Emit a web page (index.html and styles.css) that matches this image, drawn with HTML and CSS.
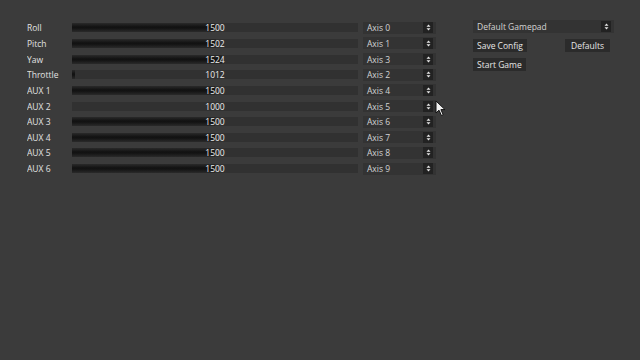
FILE: index.html
```html
<!DOCTYPE html>
<html lang="en">
<head>
    <meta charset="UTF-8">
    <title>Gamepad Config</title>
    <link rel="stylesheet" href="styles.css">
</head>
<body>
    <div class="main">
        <div class="channels" id="channels"></div>

        <div class="side">
            <div class="select wide">
                <span>Default Gamepad</span>
                <span class="arrows"><svg width="5" height="7" viewBox="0 0 5 7"><path d="M2.5 0.5 L4.5 2.8 L0.5 2.8 Z M2.5 6.5 L4.5 4.2 L0.5 4.2 Z" fill="#e6e6e6"/></svg></span>
            </div>
            <div class="btn-row">
                <button>Save Config</button>
                <button class="defaults">Defaults</button>
            </div>
            <div class="btn-row">
                <button>Start Game</button>
            </div>
        </div>
    </div>

    <svg class="cursor" width="12" height="17" viewBox="0 0 12 17">
        <path d="M1 1 L1 13 L4 10.2 L6.4 15.5 L8.2 14.7 L5.9 9.6 L10 9.6 Z" fill="#f2f2f2" stroke="#111" stroke-width="1"/>
    </svg>

    <script>
        const channels = [
            ['Roll', 1500, 'Axis 0'],
            ['Pitch', 1502, 'Axis 1'],
            ['Yaw', 1524, 'Axis 3'],
            ['Throttle', 1012, 'Axis 2'],
            ['AUX 1', 1500, 'Axis 4'],
            ['AUX 2', 1000, 'Axis 5'],
            ['AUX 3', 1500, 'Axis 6'],
            ['AUX 4', 1500, 'Axis 7'],
            ['AUX 5', 1500, 'Axis 8'],
            ['AUX 6', 1500, 'Axis 9']
        ];

        const arrows = '<span class="arrows"><svg width="5" height="7" viewBox="0 0 5 7"><path d="M2.5 0.5 L4.5 2.8 L0.5 2.8 Z M2.5 6.5 L4.5 4.2 L0.5 4.2 Z" fill="#e6e6e6"/></svg></span>';
        const container = document.getElementById('channels');

        channels.forEach(([name, value, axis]) => {
            const pct = (value - 1000) / 10;
            const row = document.createElement('div');
            row.className = 'row';
            row.innerHTML = `
                <div class="label">${name}</div>
                <div class="bar">
                    <div class="fill" style="width: ${pct}%"></div>
                    <div class="value">${value}</div>
                </div>
                <div class="select"><span>${axis}</span>${arrows}</div>`;
            container.appendChild(row);
        });
    </script>
</body>
</html>
```

FILE: styles.css
```css
body {
    margin: 0;
    background-color: #3b3b3b;
    color: #e2e2e2;
    font-family: "Open Sans", "Noto Sans", sans-serif;
    font-size: 8.5px;
    width: 640px;
    height: 360px;
    overflow: hidden;
    position: relative;
}

.main {
    display: flex;
    padding: 20px 0 0 27px;
}

.channels {
    display: flex;
    flex-direction: column;
}

.row {
    display: flex;
    align-items: center;
    height: 15.65px;
}

.label {
    width: 45px;
}

.bar {
    position: relative;
    width: 286px;
    height: 9px;
    background-color: #313131;
    display: flex;
    align-items: center;
}

.fill {
    height: 100%;
    background: linear-gradient(to bottom, #2a2a2a 0%, #111111 45%, #151515 60%, #2a2a2a 100%);
}

.value {
    position: absolute;
    left: 0;
    right: 0;
    text-align: center;
    line-height: 9px;
    color: #ededed;
}

.select {
    display: flex;
    align-items: center;
    justify-content: space-between;
    width: 66px;
    height: 12px;
    margin-left: 5px;
    padding: 0 3px 0 4px;
    background-color: #333333;
    color: #d4d4d4;
}

.select.wide {
    width: 134px;
    height: 13px;
    margin-left: 0;
}

.arrows {
    display: flex;
    align-items: center;
    justify-content: center;
    width: 10px;
    height: 11px;
    background-color: #222222;
}

.side {
    display: flex;
    flex-direction: column;
    gap: 6px;
    margin-left: 37px;
    width: 141px;
}

.btn-row {
    display: flex;
    justify-content: space-between;
    padding-right: 4px;
}

button {
    font-family: inherit;
    font-size: 8.5px;
    color: #e6e6e6;
    background-color: #2b2b2b;
    border: none;
    height: 13px;
    padding: 0 4px;
    line-height: 13px;
}

button.defaults {
    padding: 0 6px;
}

.cursor {
    position: absolute;
    left: 435px;
    top: 100px;
}
```
